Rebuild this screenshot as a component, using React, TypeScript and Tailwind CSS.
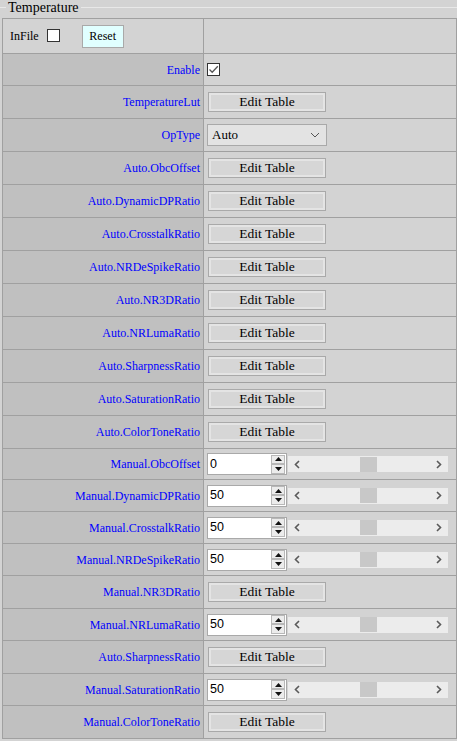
import React from "react";

type RowKind = "check" | "edit" | "select" | "spin";

interface Row {
  label: string;
  kind: RowKind;
  value?: string;
  h: string;
}

const rows: Row[] = [
  { label: "Enable", kind: "check", h: "h-[32px]" },
  { label: "TemperatureLut", kind: "edit", h: "h-[33px]" },
  { label: "OpType", kind: "select", h: "h-[33px]" },
  { label: "Auto.ObcOffset", kind: "edit", h: "h-[33px]" },
  { label: "Auto.DynamicDPRatio", kind: "edit", h: "h-[33px]" },
  { label: "Auto.CrosstalkRatio", kind: "edit", h: "h-[33px]" },
  { label: "Auto.NRDeSpikeRatio", kind: "edit", h: "h-[33px]" },
  { label: "Auto.NR3DRatio", kind: "edit", h: "h-[33px]" },
  { label: "Auto.NRLumaRatio", kind: "edit", h: "h-[33px]" },
  { label: "Auto.SharpnessRatio", kind: "edit", h: "h-[33px]" },
  { label: "Auto.SaturationRatio", kind: "edit", h: "h-[33px]" },
  { label: "Auto.ColorToneRatio", kind: "edit", h: "h-[33px]" },
  { label: "Manual.ObcOffset", kind: "spin", value: "0", h: "h-[31px]" },
  { label: "Manual.DynamicDPRatio", kind: "spin", value: "50", h: "h-[32px]" },
  { label: "Manual.CrosstalkRatio", kind: "spin", value: "50", h: "h-[32px]" },
  { label: "Manual.NRDeSpikeRatio", kind: "spin", value: "50", h: "h-[32px]" },
  { label: "Manual.NR3DRatio", kind: "edit", h: "h-[33px]" },
  { label: "Manual.NRLumaRatio", kind: "spin", value: "50", h: "h-[32px]" },
  { label: "Auto.SharpnessRatio", kind: "edit", h: "h-[33px]" },
  { label: "Manual.SaturationRatio", kind: "spin", value: "50", h: "h-[32px]" },
  { label: "Manual.ColorToneRatio", kind: "edit", h: "h-[33px]" },
];

const serif = "font-['Liberation_Serif',serif]";

const EditButton = () => (
  <button className="ml-[4px] w-[118px] h-[20px] border border-[#a9a9a9] bg-[#d6d6d6] shadow-[inset_0_0_0_2px_#e4e4e4] text-[13.5px] leading-none text-black font-['Liberation_Serif',serif]">
    Edit Table
  </button>
);

const CheckBox = ({ checked }: { checked: boolean }) => (
  <span className="inline-flex w-[13px] h-[13px] border border-[#333] bg-white items-center justify-center">
    {checked && (
      <svg width="11" height="11" viewBox="0 0 11 11">
        <path d="M1.5 5.5 L4.2 8.2 L9.8 2.2" fill="none" stroke="#555" strokeWidth="1.3" />
      </svg>
    )}
  </span>
);

const SelectBox = () => (
  <div className="ml-[3px] w-[120px] h-[22px] border border-[#a9a9a9] bg-[#e3e3e3] flex items-center justify-between pl-[4px] pr-[6px]">
    <span className="text-[13px] text-black font-['Liberation_Serif',serif]">Auto</span>
    <svg width="10" height="6" viewBox="0 0 10 6">
      <path d="M1 1 L5 5 L9 1" fill="none" stroke="#555" strokeWidth="1" />
    </svg>
  </div>
);

const SpinBox = ({ value }: { value: string }) => (
  <div className="flex items-center">
    <div className="ml-[3px] w-[80px] h-[22px] border border-[#a9a9a9] bg-white flex items-center justify-between pr-[1px]">
      <span className="pl-[2px] text-[12.5px] text-black font-['Liberation_Sans',sans-serif]">{value}</span>
      <div className="flex flex-col">
        <span className="w-[14px] h-[9px] bg-[#ececec] border border-[#b8b8b8] flex items-center justify-center">
          <svg width="7" height="4" viewBox="0 0 7 4"><path d="M0 4 L3.5 0 L7 4 Z" fill="#111" /></svg>
        </span>
        <span className="w-[14px] h-[10px] bg-[#ececec] border border-[#b8b8b8] flex items-center justify-center">
          <svg width="7" height="4" viewBox="0 0 7 4"><path d="M0 0 L3.5 4 L7 0 Z" fill="#111" /></svg>
        </span>
      </div>
    </div>
    <div className="ml-[1px] w-[160px] h-[16px] bg-[#ececec] flex items-center justify-between px-[6px]">
      <svg width="6" height="9" viewBox="0 0 6 9">
        <path d="M5 1 L1.5 4.5 L5 8" fill="none" stroke="#5a5a5a" strokeWidth="1.6" />
      </svg>
      <span className="w-[17px] h-[15px] bg-[#c8c8c8] ml-[60px]" />
      <span className="flex-1" />
      <svg width="6" height="9" viewBox="0 0 6 9">
        <path d="M1 1 L4.5 4.5 L1 8" fill="none" stroke="#5a5a5a" strokeWidth="1.6" />
      </svg>
    </div>
  </div>
);

export default function App() {
  return (
    <div className={`w-[457px] h-[741px] bg-[#d3d3d3] overflow-hidden ${serif}`}>
      {/* legend */}
      <div className="flex items-center h-[15px]">
        <div className="w-[6px] h-px bg-[#e8e8e8]" />
        <span className="px-[2px] text-[14px] leading-[15px] text-black">Temperature</span>
        <div className="flex-1 h-px bg-[#e8e8e8]" />
      </div>

      <div className="ml-[2px] mt-[3px] border-l border-t border-[#a0a0a0]">
        <div className="flex h-[35px]">
          <div className="w-[201px] border-r border-b border-[#a0a0a0] bg-[#d3d3d3] flex items-center pl-[7px]">
            <span className="text-[12px] text-black">InFile</span>
            <span className="ml-[8px] mt-[1px]">
              <CheckBox checked={false} />
            </span>
            <button className="ml-[22px] w-[42px] h-[23px] border border-[#a9a9a9] bg-[#e0ffff] text-[12px] text-black font-['Liberation_Serif',serif]">
              Reset
            </button>
          </div>
          <div className="w-[253px] border-r border-b border-[#a0a0a0]" />
        </div>

        {rows.map((r, i) => (
          <div key={i} className={`flex ${r.h}`}>
            <div className="w-[201px] border-r border-b border-[#a0a0a0] bg-[#c0c0c0] flex items-center justify-end pr-[3px]">
              <span className="text-[12px] text-[#0000ff]">{r.label}</span>
            </div>
            <div className="w-[253px] border-r border-b border-[#a0a0a0] bg-[#d3d3d3] flex items-center">
              {r.kind === "check" && (
                <span className="ml-[3px]">
                  <CheckBox checked={true} />
                </span>
              )}
              {r.kind === "edit" && <EditButton />}
              {r.kind === "select" && <SelectBox />}
              {r.kind === "spin" && <SpinBox value={r.value || ""} />}
            </div>
          </div>
        ))}
      </div>
    </div>
  );
}
